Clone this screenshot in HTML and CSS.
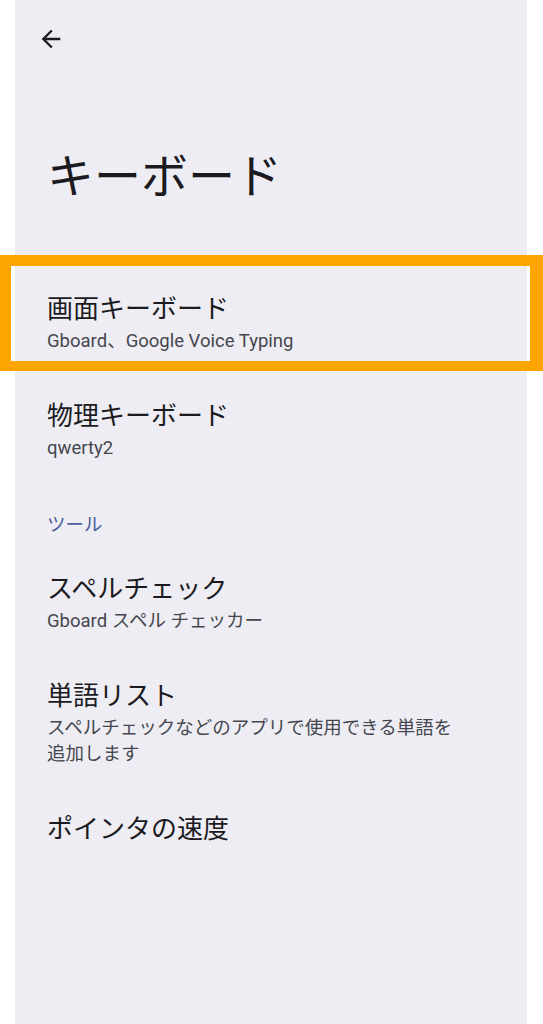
FILE: index.html
```html
<!DOCTYPE html>
<html lang="ja">
<head>
  <meta charset="UTF-8" />
  <title>キーボード</title>
  <link rel="stylesheet" href="styles.css">
</head>
<body>
  <div class="screen">
    <div class="topbar">
      <span class="back-btn">
        <svg viewBox="0 0 24 24" width="28" height="28">
          <path d="M20 11H7.83l5.59-5.59L12 4l-8 8 8 8 1.41-1.41L7.83 13H20v-2z" fill="#1b1b1f"/>
        </svg>
      </span>
    </div>

    <h1 class="page-title">キーボード</h1>

    <div class="list">
      <div class="item highlighted">
        <div class="item-title">画面キーボード</div>
        <div class="item-sub">Gboard、Google Voice Typing</div>
      </div>
      <div class="item">
        <div class="item-title">物理キーボード</div>
        <div class="item-sub">qwerty2</div>
      </div>

      <div class="section-label">ツール</div>

      <div class="item">
        <div class="item-title">スペルチェック</div>
        <div class="item-sub">Gboard スペル チェッカー</div>
      </div>
      <div class="item">
        <div class="item-title">単語リスト</div>
        <div class="item-sub">スペルチェックなどのアプリで使用できる単語を<br>追加します</div>
      </div>
      <div class="item">
        <div class="item-title">ポインタの速度</div>
      </div>
    </div>
  </div>
</body>
</html>
```

FILE: styles.css
```css
* {
  margin: 0;
  padding: 0;
  box-sizing: border-box;
}

html, body {
  background: #fff;
  font-family: Roboto, "Noto Sans CJK JP", sans-serif;
  color: #1b1b1f;
}

.screen {
  margin: 0 16px 0 15px;
  min-height: 1024px;
  background: #eeedf3;
}

.topbar {
  height: 78px;
  display: flex;
  align-items: center;
  padding-left: 22px;
}

.back-btn {
  display: flex;
  width: 28px;
  height: 28px;
}

.page-title {
  margin-top: 69px;
  padding-left: 32px;
  font-size: 47px;
  font-weight: 400;
  line-height: 60px;
}

.list {
  margin-top: 63px;
}

.item {
  padding: 22px 32px 23px;
  position: relative;
}

.item-title {
  font-size: 26px;
  line-height: 34px;
}

.item-sub {
  margin-top: 2px;
  font-size: 18.5px;
  line-height: 26px;
  color: #45464e;
}

.section-label {
  padding: 28px 32px 12px;
  font-size: 18.5px;
  line-height: 26px;
  color: #4a5e9e;
}

.highlighted::after {
  content: "";
  position: absolute;
  top: -15px;
  left: -15px;
  right: -16px;
  bottom: 6px;
  border: solid #ffa500;
  border-width: 11px 13px 10px 11px;
}
```
